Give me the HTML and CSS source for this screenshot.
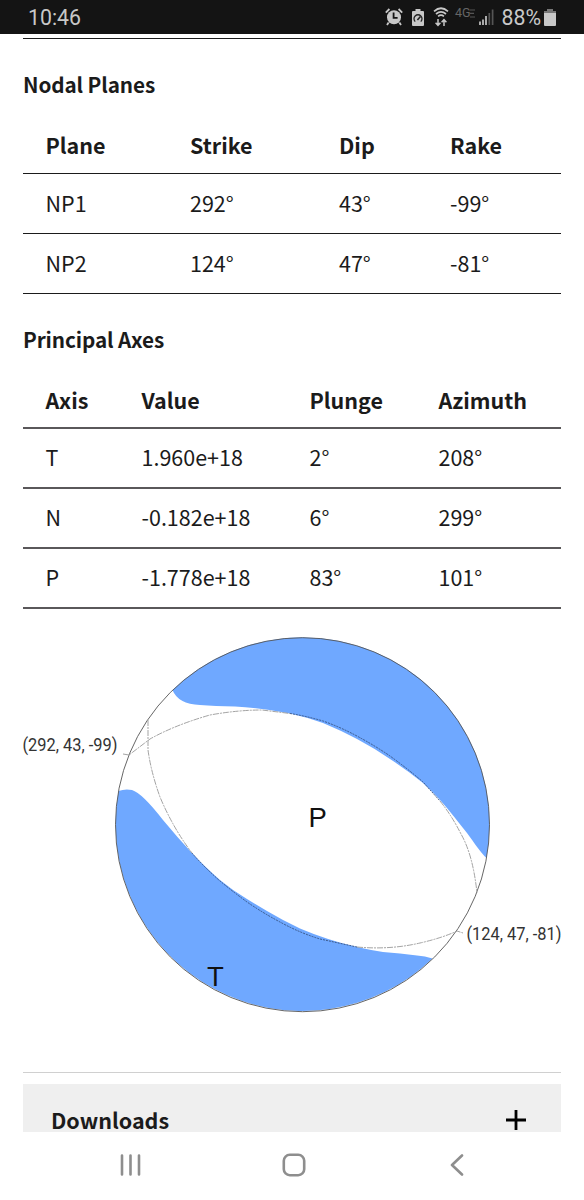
FILE: index.html
```html
<!DOCTYPE html>
<html lang="en">

<head>
    <meta charset="UTF-8">
    <meta name="viewport" content="width=device-width, initial-scale=1.0">
    <title>Moment Tensor</title>
    <link rel="stylesheet" href="styles.css">
</head>

<body>
    <div class="screen">
        <header class="status-bar">
            <span class="clock">10:46</span>
            <div class="status-icons">
                <svg class="icon-alarm" width="18" height="18" viewBox="0 0 18 18">
                    <circle cx="9" cy="9.3" r="7" fill="#c8c8c8" />
                    <path d="M0.8 4.6L4.4 1M17.2 4.6L13.6 1M3.6 14.5L2 17M14.4 14.5L16 17" stroke="#c8c8c8" stroke-width="1.8" fill="none" />
                    <path d="M8.6 4.6V9.8H12.6" stroke="#141414" stroke-width="1.8" fill="none" />
                </svg>
                <svg class="icon-saver" width="12" height="17" viewBox="0 0 12 17">
                    <path d="M3.5 0H8.5V2H11Q12 2 12 3V16Q12 17 11 17H1Q0 17 0 16V3Q0 2 1 2H3.5Z" fill="#c8c8c8" />
                    <path d="M3.2 12.6A4 4 0 1 1 8.8 12.6" stroke="#222" stroke-width="1.3" fill="none" />
                    <path d="M5.4 11L8.5 7.4" stroke="#222" stroke-width="1.6" />
                </svg>
                <svg class="icon-wifi" width="16" height="20" viewBox="0 0 16 20">
                    <g stroke="#c8c8c8" fill="none">
                        <path d="M1 4.3Q8 -1.8 15 4.3" stroke-width="1.7" />
                        <path d="M3 7Q8 2.6 13 7" stroke-width="1.7" />
                        <path d="M5.1 9.4Q8 7 10.9 9.4" stroke-width="1.7" />
                        <path d="M5 12V18M2.6 15.8L5 18.4L7.4 15.8M11 19V13M8.6 15.2L11 12.6L13.4 15.2" stroke-width="1.5" />
                    </g>
                </svg>
                <span class="network">4G<svg width="5" height="9" viewBox="0 0 5 9"><path d="M0 1H5M0 4.4H4M0 8H5" stroke="#555" stroke-width="1.2" /></svg></span>
                <svg class="icon-signal" width="15" height="16" viewBox="0 0 15 16">
                    <path d="M1 16V12.5M4 16V10.5M7 16V7" stroke="#d0d0d0" stroke-width="1.6" />
                    <path d="M10.3 16V4M13.6 16V0.5" stroke="#555" stroke-width="1.7" />
                </svg>
                <span class="battery-text">88%</span>
                <svg class="icon-battery" width="12" height="17" viewBox="0 0 12 17">
                    <path d="M3 0H9V2H12V5H0V2H3Z" fill="#777" />
                    <path d="M0 4H12V16Q12 17 11 17H1Q0 17 0 16Z" fill="#c8c8c8" />
                </svg>
            </div>
        </header>

        <main class="content">
            <h4 class="heading">Nodal Planes</h4>
            <table class="tabular planes">
                <thead>
                    <tr>
                        <th class="col-plane">Plane</th>
                        <th class="col-strike">Strike</th>
                        <th class="col-dip">Dip</th>
                        <th>Rake</th>
                    </tr>
                </thead>
                <tbody>
                    <tr>
                        <td>NP1</td>
                        <td>292°</td>
                        <td>43°</td>
                        <td>-99°</td>
                    </tr>
                    <tr>
                        <td>NP2</td>
                        <td>124°</td>
                        <td>47°</td>
                        <td>-81°</td>
                    </tr>
                </tbody>
            </table>

            <h4 class="heading">Principal Axes</h4>
            <table class="tabular axes">
                <thead>
                    <tr>
                        <th class="col-axis">Axis</th>
                        <th class="col-value">Value</th>
                        <th class="col-plunge">Plunge</th>
                        <th>Azimuth</th>
                    </tr>
                </thead>
                <tbody>
                    <tr>
                        <td>T</td>
                        <td>1.960e+18</td>
                        <td>2°</td>
                        <td>208°</td>
                    </tr>
                    <tr>
                        <td>N</td>
                        <td>-0.182e+18</td>
                        <td>6°</td>
                        <td>299°</td>
                    </tr>
                    <tr>
                        <td>P</td>
                        <td>-1.778e+18</td>
                        <td>83°</td>
                        <td>101°</td>
                    </tr>
                </tbody>
            </table>

            <!-- beachball -->
            <svg class="beachball" width="561" height="463" viewBox="23 609 561 463">
                <path class="fill" d="M172.5 690A187 187 0 0 1 486.5 858C481 853 475 844 467 833C458 822 450 811 440 800Q433 792 423 783Q407 770 390 759Q374 748 357 739Q340 730 323 723Q306 717 290 713.5Q262 708 235 706.5Q215 706 200 705Q178 704 172.5 690Z" />
                <path class="fill" d="M118.5 791Q125 788.5 132 790Q142 793 163 820Q177 837 192 853Q204 866 220 880Q232 890 247 899L267 911Q283 920.5 300 928.5Q327 940 357 947Q370 950 383 952Q400 953 417 955.5Q425 956 432.5 958.5A187 187 0 0 1 118.5 791Z" />
                <circle class="outline" cx="302.5" cy="824.7" r="187" />
                <path class="nodal" d="M123 754L129 755L150 739Q175 725 210 715Q238 710 262 710L290 713.5" />
                <path class="nodal dark" d="M290 713.5Q306 716 323 721Q340 727 355 735Q374 745 390 756Q408 769 423 782L440 801" />
                <path class="nodal" d="M440 801Q452 816 461 834Q473 855 477 893" />
                <path class="nodal" d="M148 720V750Q151 772 160 797Q173 828 192 853" />
                <path class="nodal dark" d="M192 853Q204 867 220 881Q232 891 247 902Q263 913 280 922Q300 933 320 939L357 947" />
                <path class="nodal" d="M357 947Q390 950 420 943Q442 938 457 931L463 933" />
                <text class="plane-label" x="22.5" y="751" textLength="95" lengthAdjust="spacingAndGlyphs">(292, 43, -99)</text>
                <text class="plane-label" x="466.5" y="940" textLength="95" lengthAdjust="spacingAndGlyphs">(124, 47, -81)</text>
                <text class="axis-label" x="308.5" y="827">P</text>
                <text class="axis-label" x="207" y="985.5">T</text>
            </svg>

            <section class="accordion">
                <div class="accordion-toggle">
                    <span>Downloads</span>
                    <svg width="20" height="20" viewBox="0 0 20 20">
                        <path d="M10 0V20M0 10H20" stroke="#000" stroke-width="2.8" />
                    </svg>
                </div>
            </section>
        </main>

        <nav class="nav-bar">
            <svg width="22" height="22" viewBox="0 0 22 22">
                <path d="M2 1.5V20.5M10.5 1.5V20.5M19 1.5V20.5" />
            </svg>
            <svg class="home" width="24" height="24" viewBox="0 0 24 24">
                <rect x="1.8" y="1.8" width="20.4" height="20.4" rx="6" />
            </svg>
            <svg width="14" height="22" viewBox="0 0 14 22">
                <path d="M12 1.5L2 11L12 20.5" />
            </svg>
        </nav>
    </div>
</body>

</html>
```
FILE: styles.css
```css
* {
    box-sizing: border-box;
    margin: 0;
    padding: 0;
}
body {
    background-color: #fff;
    color: #1b1b1b;
    font-family: "Noto Sans CJK SC", "Open Sans", sans-serif;
    font-size: 21.5px;
}
svg {
    display: block;
    flex: none;
}
.screen {
    width: 584px;
    height: 1200px;
    display: flex;
    flex-direction: column;
    overflow: hidden;
}

/* status bar */
.status-bar {
    height: 34px;
    flex: none;
    background-color: #141414;
    color: #c8c8c8;
    font-family: Roboto, sans-serif;
    font-size: 21.3px;
    line-height: 35px;
    display: flex;
    justify-content: space-between;
    padding: 0 28px;
}
.status-icons {
    display: flex;
    align-items: center;
}
.icon-saver {
    margin-left: 9px;
}
.icon-wifi {
    margin-left: 9px;
}
.network {
    display: flex;
    margin: -8px 0 0 6px;
    color: #666;
    font-size: 12.5px;
    line-height: 12px;
    align-items: center;
}
.icon-signal {
    margin-left: 4px;
}
.battery-text {
    margin-left: 7px;
}
.icon-battery {
    margin-left: 3px;
}

/* content */
.content {
    flex: 1;
    min-height: 0;
    overflow: hidden;
    margin: 4px 0 0 23px;
    padding-right: 23px;
}
.content::before {
    content: "";
    display: block;
    height: 1px;
    background-color: #1b1b1b;
}
.heading {
    height: 80px;
    padding-top: 30px;
    font-size: 20.7px;
    line-height: 30px;
    letter-spacing: -0.1px;
}
.tabular {
    width: 538px;
    table-layout: fixed;
    border-collapse: separate;
    border-spacing: 0;
    text-align: left;
}
.tabular th,
.tabular td {
    height: 60px;
    padding: 0 0 2px 22.5px;
    border-bottom: 1px solid #1b1b1b;
    line-height: 30px;
    white-space: nowrap;
}
.tabular th {
    height: 55px;
}
.axes th,
.axes td {
    border-bottom: 2px solid #5a585a;
}
.col-plane {
    width: 144.5px;
}
.col-strike {
    width: 149px;
}
.col-dip {
    width: 111px;
}
.col-axis {
    width: 96px;
}
.col-value {
    width: 168px;
}
.col-plunge {
    width: 129px;
}

.beachball .fill {
    fill: #6fa8ff;
}
.beachball .outline {
    fill: none;
    stroke: #555;
    stroke-width: 0.9;
}
.beachball .nodal {
    fill: none;
    stroke: #999;
    stroke-width: 0.9;
    stroke-dasharray: 6 1 2 1;
}
.beachball .dark {
    stroke: #34507f;
    stroke-dasharray: 2 1;
}
.plane-label {
    font: 17.5px Roboto, sans-serif;
    fill: #333;
}
.axis-label {
    font: 27.5px "Liberation Sans", sans-serif;
    fill: #111;
}

.accordion {
    border-top: 1px solid #d0d0d0;
    padding-top: 11px;
}
.accordion-toggle {
    height: 72px;
    padding: 0 35px 0 28px;
    background-color: #efefef;
    font-weight: bold;
    display: flex;
    align-items: center;
    justify-content: space-between;
}
.accordion-toggle span {
    padding-bottom: 2px;
}

/* navigation bar */
.nav-bar {
    height: 68px;
    flex: none;
    display: flex;
    align-items: center;
    justify-content: space-between;
    padding: 0 120px 3px;
    background-color: #fff;
}
.nav-bar svg {
    fill: none;
    stroke: #8e8e8e;
    stroke-width: 2.6;
    stroke-linecap: round;
    stroke-linejoin: round;
}
.nav-bar .home {
    margin-right: 5px;
}
```
